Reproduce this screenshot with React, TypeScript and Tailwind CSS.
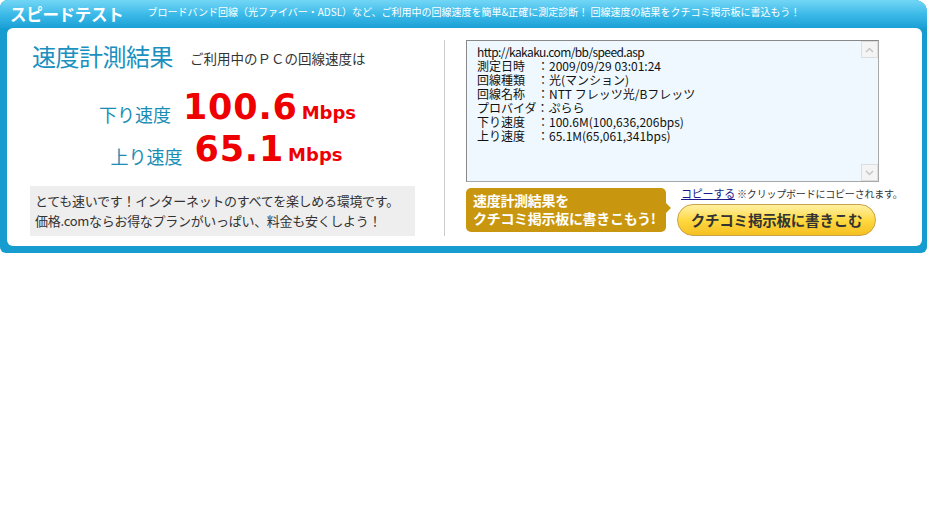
import React from "react";

const jp = { fontFamily: '"Noto Sans CJK JP", "Noto Sans", sans-serif' };
const num = { fontFamily: '"DejaVu Sans", Verdana, sans-serif' };

export default function App() {
  return (
    <div className="w-[929px] h-[525px] bg-white" style={jp}>
      <div className="w-[927px] rounded-tl-[8px] rounded-tr-[12px] rounded-b-[6px] bg-[#179ccf] pb-[7px]">
        <div className="h-[28px] rounded-tl-[8px] rounded-tr-[12px] bg-gradient-to-b from-[#72d6f5] via-[#3cbbe9] to-[#1aa0d6] flex items-center pl-[10px]">
          <span className="text-white text-[16.5px] font-bold tracking-[-0.3px] leading-none">スピードテスト</span>
          <span className="ml-[24px] text-white text-[10px] leading-none tracking-[0px] mt-[-5px]">
            ブロードバンド回線（光ファイバー・ADSL）など、ご利用中の回線速度を簡単&amp;正確に測定診断！ 回線速度の結果をクチコミ掲示板に書込もう！
          </span>
        </div>
        <div className="ml-[7px] mr-[5px] h-[218px] bg-white rounded-[6px] flex">
          {/* left */}
          <div className="w-[438px] border-r border-[#cccccc] mt-[12px] mb-[10px] flex flex-col">
            <div className="flex items-end pl-[25px] pt-[2px]">
              <span className="text-[24px] leading-[28px] text-[#1b90bf] tracking-[-0.5px]">速度計測結果</span>
              <span className="ml-[17px] text-[13.5px] leading-[22px] text-[#333333] mb-[1px]">ご利用中のＰＣの回線速度は</span>
            </div>
            <div className="flex items-end justify-center mt-[18px] h-[38px] pl-[4px]">
              <span className="text-[18px] text-[#1a8db5] leading-[22px] mb-[1px]">下り速度</span>
              <span className="ml-[12px] text-[35px] font-bold text-[#ee0000] leading-[38px] tracking-[0.8px]" style={num}>100.6</span>
              <span className="ml-[4px] text-[18px] font-bold text-[#ee0000] leading-[22px] mb-[2px]" style={num}>Mbps</span>
            </div>
            <div className="flex items-end justify-center mt-[4px] h-[38px] pl-[2px]">
              <span className="text-[18px] text-[#1a8db5] leading-[22px] mb-[1px]">上り速度</span>
              <span className="ml-[12px] text-[35px] font-bold text-[#ee0000] leading-[38px] tracking-[0.8px]" style={num}>65.1</span>
              <span className="ml-[4px] text-[18px] font-bold text-[#ee0000] leading-[22px] mb-[2px]" style={num}>Mbps</span>
            </div>
            <div className="mt-[18px] ml-[23px] w-[385px] h-[52px] bg-[#eeeeee] px-[5px] pt-[5px] text-[13px] leading-[20px] text-[#333333] tracking-[-0.3px]">
              <div>とても速いです！インターネットのすべてを楽しめる環境です。</div>
              <div>価格.comならお得なプランがいっぱい、料金も安くしよう！</div>
            </div>
          </div>
          {/* right */}
          <div className="flex-1 pl-[21px] pt-[12px] flex flex-col">
            <div className="w-[413px] h-[142px] bg-[#eef8fe] border border-[#a8a8a8] border-t-[#888888] border-l-[#888888] flex">
              <div className="flex-1 pl-[10px] pt-[4px] text-[12px] leading-[14px] text-[#111111] whitespace-pre" style={{ fontFamily: '"Noto Sans CJK JP", sans-serif' }}>
                <div className="tracking-[-0.6px]">http://kakaku.com/bb/speed.asp</div>
                <div>測定日時　：2009/09/29 03:01:24</div>
                <div>回線種類　：光(マンション)</div>
                <div>回線名称　：NTT フレッツ光/Bフレッツ</div>
                <div>プロバイダ：ぷらら</div>
                <div>下り速度　：100.6M(100,636,206bps)</div>
                <div>上り速度　：65.1M(65,061,341bps)</div>
              </div>
              <div className="w-[17px] flex flex-col justify-between">
                <div className="h-[17px] border border-[#dddddd] bg-[#f4f4f4] flex items-center justify-center">
                  <svg width="9" height="6" viewBox="0 0 9 6"><path d="M1 5 L4.5 1.5 L8 5" fill="none" stroke="#c6c6c6" strokeWidth="1.5" /></svg>
                </div>
                <div className="h-[17px] border border-[#dddddd] bg-[#f4f4f4] flex items-center justify-center">
                  <svg width="9" height="6" viewBox="0 0 9 6"><path d="M1 1 L4.5 4.5 L8 1" fill="none" stroke="#c6c6c6" strokeWidth="1.5" /></svg>
                </div>
              </div>
            </div>
            <div className="flex mt-[6px]">
              <div className="relative w-[200px] h-[44px] bg-[#c9970f] rounded-[5px] px-[7px] pt-[3px] text-white font-bold text-[14px] leading-[18px] tracking-[-0.3px]">
                <div>速度計測結果を</div>
                <div>クチコミ掲示板に書きこもう!</div>
                <div className="absolute right-[-5px] top-[15px] w-0 h-0 border-t-[5px] border-b-[5px] border-l-[5px] border-t-transparent border-b-transparent border-l-[#c9970f]" />
              </div>
              <div className="ml-[11px] flex flex-col">
                <div className="text-[10px] leading-[12px] mt-[-1px] ml-[4px] text-[#333333] tracking-[-0.2px]">
                  <span className="text-[#1a1a8c] underline text-[11px]">コピーする</span> ※クリップボードにコピーされます。
                </div>
                <div className="mt-[4px] w-[199px] h-[32px] rounded-full border border-[#c9a24a] bg-gradient-to-b from-[#fff1a0] via-[#ffd940] to-[#f5c020] flex items-center justify-center text-[14.5px] font-bold text-[#333333] tracking-[-0.2px]">
                  クチコミ掲示板に書きこむ
                </div>
              </div>
            </div>
          </div>
        </div>
      </div>
    </div>
  );
}
